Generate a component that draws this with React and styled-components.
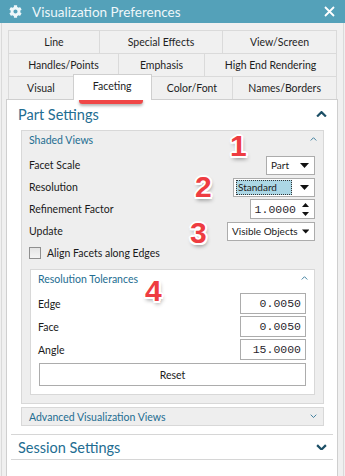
import React from 'react'
import styled, { createGlobalStyle } from 'styled-components'
import { FaCog } from 'react-icons/fa'

const font = `'Lato', 'Noto Sans', sans-serif`
const mono = `'Liberation Mono', 'DejaVu Sans Mono', monospace`
const teal = '#236d91'

const GlobalStyle = createGlobalStyle`
  * { box-sizing: border-box; }
  body { margin: 0; background: #f0f0f0; }
`

const Window = styled.div`
  position: relative;
  width: 345px;
  height: 476px;
  overflow: hidden;
  display: flex;
  flex-direction: column;
  background: #f0f0f0;
  font-family: ${font};
  color: #1a1a1a;
`

const TitleBar = styled.div`
  height: 23px;
  flex: none;
  display: flex;
  align-items: center;
  padding: 0 10px 0 9px;
  background: #54a1b9;
  color: #eef7fa;
`

const Title = styled.span`
  flex: 1;
  margin-left: 10px;
  font-size: 13.5px;
`

const Body = styled.div`
  flex: 1;
  display: flex;
  flex-direction: column;
  min-height: 0;
  margin: 0 1px;
  padding: 7px 5px 0 4px;
  border-left: 1px solid #dadada;
  border-right: 1px solid #dadada;
`

const Tabs = styled.div`
  margin-left: 2px;
  width: 329px;
  display: flex;
  flex-direction: column;
`

const TabRow = styled.div`
  display: flex;
  align-items: flex-start;
`

const Tab = styled.div`
  width: ${p => p.$w}px;
  height: ${p => (p.$active ? 26 : 23)}px;
  margin: ${p => (p.$active ? '-2px 0 -1px -1px' : '0 0 0 -1px')};
  padding-bottom: ${p => (p.$active ? 3 : 0)}px;
  position: relative;
  z-index: ${p => (p.$active ? 2 : 0)};
  display: flex;
  align-items: center;
  justify-content: center;
  background: ${p => (p.$active ? '#ffffff' : '#f0f0f0')};
  border: 1px solid ${p => (p.$active ? '#cfcfcf' : '#dadada')};
  border-bottom: none;
  font-size: 10.5px;
  color: #1e1e1e;
  &:first-child { margin-left: 0; }
`

const Panel = styled.div`
  flex: 1;
  display: flex;
  flex-direction: column;
  background: #ffffff;
  border: 1px solid #cfcfcf;
  border-bottom: none;
`

const Section = styled.div`
  margin: ${p => (p.$top ? '0 4px' : '8px 4px 0')};
  border-top: 1px solid ${p => (p.$top ? 'transparent' : '#d6d6d6')};
  border-bottom: ${p => (p.$top ? 'none' : '1px solid #d6d6d6')};
`

const SectionHead = styled.div`
  height: ${p => (p.$top ? 26 : 24)}px;
  display: flex;
  align-items: center;
  justify-content: space-between;
  padding: 0 6px 0 7px;
  font-size: 14.5px;
  color: ${teal};
`

const Groups = styled.div`
  padding: 3px 13px 0 14px;
  display: flex;
  flex-direction: column;
  gap: 3px;
`

const Group = styled.div`
  background: ${p => (p.$white ? '#ffffff' : '#eeeeee')};
  border: 1px solid #d8d8d8;
  margin: ${p => (p.$inner ? '5px 8px 0' : '0')};
  padding-bottom: ${p => (p.$open ? 8 : 0)}px;
`

const GroupHead = styled.div`
  height: 17px;
  display: flex;
  align-items: center;
  justify-content: space-between;
  padding: 0 6px 0 7px;
  font-size: 10.5px;
  color: ${teal};
`

const Rows = styled.div`
  padding-top: ${p => p.$pt}px;
`

const Row = styled.div`
  height: ${p => p.$h}px;
  display: flex;
  align-items: center;
  justify-content: space-between;
  padding: 0 8px 0 7px;
  font-size: 10.5px;
  white-space: nowrap;
`

const Select = styled.div`
  width: ${p => p.$w}px;
  height: 19px;
  display: flex;
  align-items: center;
  justify-content: space-between;
  gap: 4px;
  padding: 0 5px 0 ${p => (p.$focus ? 2 : 4)}px;
  background: #ffffff;
  border: 1px solid #acacac;
  font-size: 10px;
  white-space: nowrap;
`

const Highlight = styled.span`
  flex: 1;
  margin-right: 4px;
  height: 15px;
  display: flex;
  align-items: center;
  padding-left: 2px;
  background: #acd7e5;
  outline: 1px dotted #333;
  outline-offset: -1px;
`

const NumberBox = styled.div`
  width: ${p => p.$w}px;
  height: ${p => p.$h}px;
  display: flex;
  align-items: center;
  justify-content: flex-end;
  gap: 6px;
  padding: 0 ${p => (p.$spin ? 5 : 4)}px 0 4px;
  background: #ffffff;
  border: 1px solid #acacac;
  font-family: ${mono};
  font-size: 11.5px;
  color: #2a1f2e;
`

const Spin = styled.div`
  display: flex;
  flex-direction: column;
  gap: 5px;
`

const Check = styled.label`
  display: flex;
  align-items: center;
  gap: 6px;
`

const Box = styled.span`
  width: 12px;
  height: 12px;
  border: 1px solid #8f8f8f;
  background: linear-gradient(#e4e4e4, #f4f4f4);
`

const ResetButton = styled.div`
  height: 23px;
  margin: 2px 8px 0;
  display: flex;
  align-items: center;
  justify-content: center;
  border: 1px solid #acacac;
  background: #ffffff;
  font-size: 10.5px;
`

const Marker = styled.span`
  position: absolute;
  left: ${p => p.$x}px;
  top: ${p => p.$y}px;
  font-family: 'Liberation Sans', Arial, sans-serif;
  font-weight: bold;
  font-size: 30px;
  line-height: 1;
  color: #ee3c41;
  text-shadow:
    2px 0 0 #fff, -2px 0 0 #fff, 0 2px 0 #fff, 0 -2px 0 #fff,
    1.5px 1.5px 0 #fff, -1.5px 1.5px 0 #fff, 1.5px -1.5px 0 #fff, -1.5px -1.5px 0 #fff,
    1px 3px 4px rgba(0, 0, 0, 0.45);
`

const Underline = styled.div`
  position: absolute;
  left: 79px;
  top: 97px;
  width: 64px;
  height: 7px;
  border-radius: 4px;
  background: #f04646;
  box-shadow: 0 2px 3px rgba(0, 0, 0, 0.3);
`

const Caret = ({ down, size = 10, color = teal, width = 1.8 }) => (
  <svg width={size} height={size * 0.6} viewBox="0 0 10 6">
    <polyline
      points={down ? '1,1 5,5 9,1' : '1,5 5,1 9,5'}
      fill="none"
      stroke={color}
      strokeWidth={width}
    />
  </svg>
)

const Arrow = ({ up }) => (
  <svg width="7" height="4" viewBox="0 0 7 4">
    <polygon points={up ? '0,4 3.5,0 7,4' : '0,0 7,0 3.5,4'} fill="#111" />
  </svg>
)

const DropDown = ({ w, children, focus }) => (
  <Select $w={w} $focus={focus}>
    {focus ? <Highlight>{children}</Highlight> : <span>{children}</span>}
    <svg width="9" height="5" viewBox="0 0 9 5">
      <polygon points="0,0 9,0 4.5,5" fill="#111" />
    </svg>
  </Select>
)

const tabRows = [
  [['Line', 92], ['Special Effects', 124], ['View/Screen', 115]],
  [['Handles/Points', 111], ['Emphasis', 87], ['High End Rendering', 133]],
  [['Visual', 66], ['Faceting', 79], ['Color/Font', 83], ['Names/Borders', 105]],
]

export default function App() {
  return (
    <Window>
      <GlobalStyle />
      <TitleBar>
        <FaCog size={13} />
        <Title>Visualization Preferences</Title>
        <svg width="11" height="11" viewBox="0 0 11 11">
          <path d="M1 1 L10 10 M10 1 L1 10" stroke="#ffffff" strokeWidth="1.8" />
        </svg>
      </TitleBar>
      <Body>
        <Tabs>
          {tabRows.map((row, i) => (
            <TabRow key={i}>
              {row.map(([label, w]) => (
                <Tab key={label} $w={w} $active={label === 'Faceting'}>
                  {label}
                </Tab>
              ))}
            </TabRow>
          ))}
        </Tabs>
        <Panel>
          <Section $top>
            <SectionHead $top>
              Part Settings
              <Caret size={11} color="#1c4f66" width={2} />
            </SectionHead>
          </Section>
          <Groups>
            <Group $open>
              <GroupHead>
                Shaded Views
                <Caret size={7} width={1.2} />
              </GroupHead>
              <Rows $pt={6}>
                <Row $h={22}>
                  Facet Scale
                  <DropDown w={49}>Part</DropDown>
                </Row>
                <Row $h={22}>
                  Resolution
                  <DropDown w={82} focus>Standard</DropDown>
                </Row>
                <Row $h={22}>
                  Refinement Factor
                  <NumberBox $w={65} $h={20} $spin>
                    1.0000
                    <Spin>
                      <Arrow up />
                      <Arrow />
                    </Spin>
                  </NumberBox>
                </Row>
                <Row $h={22}>
                  Update
                  <DropDown w={88}>Visible Objects</DropDown>
                </Row>
                <Row $h={22}>
                  <Check>
                    <Box />
                    Align Facets along Edges
                  </Check>
                </Row>
              </Rows>
              <Group $white $inner $open>
                <GroupHead>
                  Resolution Tolerances
                  <Caret size={7} width={1.2} />
                </GroupHead>
                <Rows $pt={5}>
                  <Row $h={23}>
                    Edge
                    <NumberBox $w={66} $h={21}>0.0050</NumberBox>
                  </Row>
                  <Row $h={23}>
                    Face
                    <NumberBox $w={66} $h={21}>0.0050</NumberBox>
                  </Row>
                  <Row $h={23}>
                    Angle
                    <NumberBox $w={66} $h={21}>15.0000</NumberBox>
                  </Row>
                </Rows>
                <ResetButton>Reset</ResetButton>
              </Group>
            </Group>
            <Group>
              <GroupHead>
                Advanced Visualization Views
                <Caret size={7} width={1.2} down />
              </GroupHead>
            </Group>
          </Groups>
          <Section>
            <SectionHead>
              Session Settings
              <Caret size={11} color="#1c4f66" width={2} down />
            </SectionHead>
          </Section>
        </Panel>
      </Body>
      <Underline />
      <Marker $x={230} $y={131}>1</Marker>
      <Marker $x={195} $y={172}>2</Marker>
      <Marker $x={190} $y={218}>3</Marker>
      <Marker $x={145} $y={276}>4</Marker>
    </Window>
  )
}
